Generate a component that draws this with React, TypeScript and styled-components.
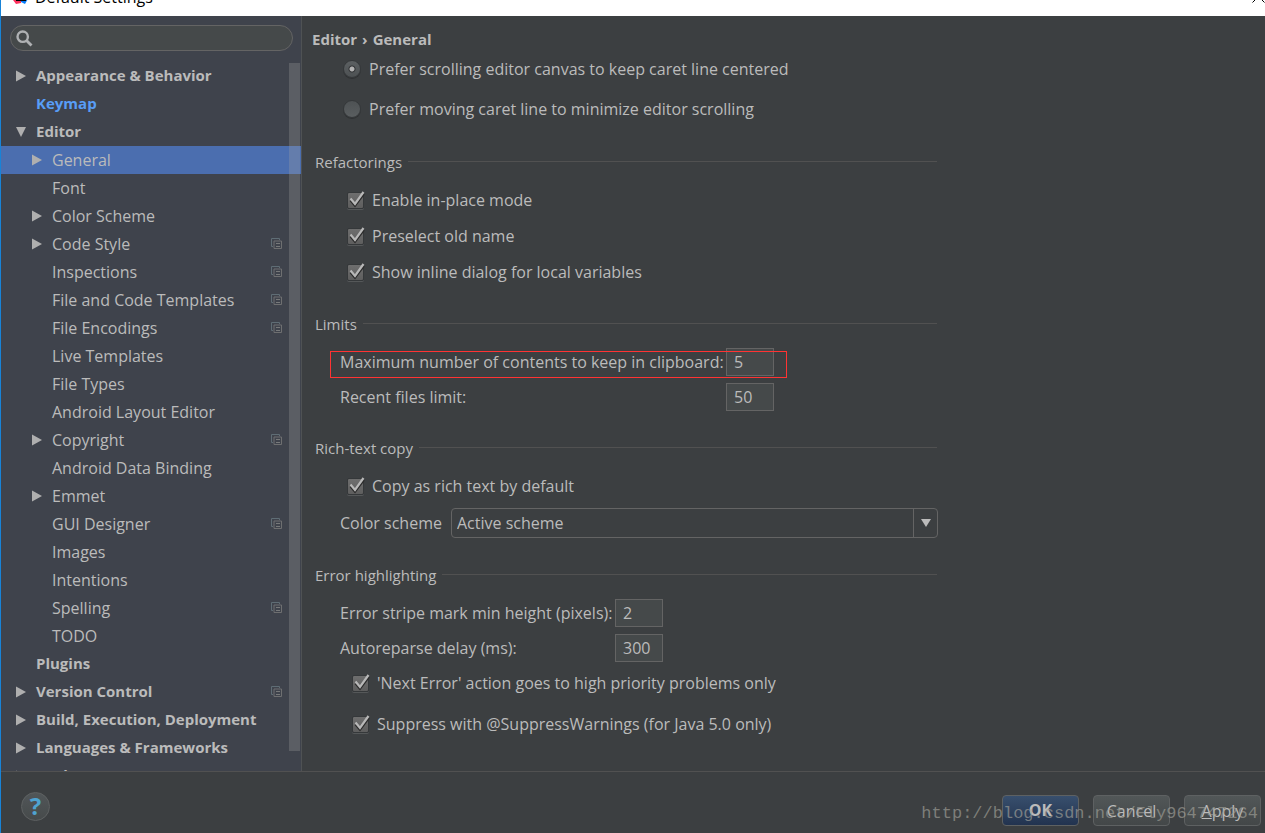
import React, { useState } from "react";
import styled, { createGlobalStyle, css } from "styled-components";

const GlobalStyle = createGlobalStyle`
  *, *::before, *::after { box-sizing: border-box; }
  body {
    margin: 0;
    background: #3c3f41;
    color: #bbbbbb;
    font: 16px/20px "Open Sans", "Noto Sans", sans-serif;
  }
  button, input, select { font: inherit; color: inherit; }
`;

const Window = styled.div`
  position: relative;
  display: flex;
  flex-direction: column;
  height: 100vh;
  overflow: hidden;
  border-left: 1px solid #1883d7;
`;

const TitleBar = styled.header`
  display: flex;
  flex: none;
  align-items: flex-end;
  gap: 6px;
  height: 16px;
  padding: 0 0 12px 12px;
  overflow: hidden;
  background: #ffffff;
  color: #000000;
`;

const TitleText = styled.span`
  flex: 1;
  line-height: 14px;
`;

const CloseButton = styled.button`
  display: flex;
  align-items: flex-end;
  padding: 0;
  border: 0;
  background: none;
  color: #000000;
`;

const Body = styled.div`
  display: flex;
  flex: 1;
  min-height: 0;
`;

const Sidebar = styled.aside`
  display: flex;
  flex: none;
  flex-direction: column;
  width: 301px;
  padding-top: 9px;
  border-right: 1px solid #4f5254;
  background: #3f434c;
`;

const SearchBox = styled.label`
  display: flex;
  flex: none;
  align-items: center;
  height: 26px;
  margin: 0 8px 11px 9px;
  padding-left: 5px;
  border: 1px solid #646464;
  border-radius: 13px;
  background: #45494a;
`;

const SearchInput = styled.input`
  flex: 1;
  min-width: 0;
  padding: 0 8px;
  border: 0;
  outline: 0;
  background: none;
`;

const TreeArea = styled.nav`
  position: relative;
  flex: 1;
  min-height: 0;
  overflow: hidden;
`;

const ScrollThumb = styled.div`
  position: absolute;
  top: 1px;
  right: 1px;
  bottom: 20px;
  width: 11px;
  background: rgba(166, 166, 166, 0.28);
`;

const RowLabel = styled.span`
  flex: 1;
`;

const TreeRow = styled.a<{ $level: number; $bold?: boolean; $active?: boolean; $accent?: boolean }>`
  display: flex;
  align-items: center;
  height: 28px;
  padding: 0 18px 0 ${(p) => (p.$level ? 31 : 15)}px;
  color: ${(p) => (p.$accent ? "#589df6" : "inherit")};
  text-decoration: none;
  white-space: nowrap;
  ${(p) =>
    p.$bold &&
    css`
      font-size: 15px;
      font-weight: 700;

      ${RowLabel} { padding-bottom: 2px; }
    `}
  ${(p) => p.$active && css`background: #4b6eaf;`}
`;

const ArrowSlot = styled.span`
  display: flex;
  flex: none;
  width: 20px;
`;

const Content = styled.main`
  flex: 1;
  min-width: 0;
  padding: 13px 20px 0 10px;
  overflow: hidden;
`;

const Breadcrumb = styled.h1`
  display: flex;
  gap: 5px;
  margin: 0;
  font-size: 15px;
  line-height: 20px;
`;

const Form = styled.form`
  max-width: 626px;
  padding-left: 3px;
`;

const Group = styled.fieldset<{ $gap: number }>`
  min-width: 0;
  margin: ${(p) => p.$gap}px 0 0;
  padding: 0;
  border: 0;
`;

const GroupTitle = styled.div`
  display: flex;
  align-items: center;
  gap: 6px;
  font-size: 15px;

  &::after {
    flex: 1;
    height: 1px;
    margin: 0 1px 2px 0;
    background: #515151;
    content: "";
  }
`;

const Stack = styled.div<{ $top?: number; $indent: number; $gap?: number }>`
  display: flex;
  flex-direction: column;
  gap: ${(p) => p.$gap ?? 0}px;
  padding: ${(p) => p.$top ?? 0}px 0 0 ${(p) => p.$indent}px;
`;

const OptionLabel = styled.label<{ $height: number }>`
  display: flex;
  align-items: center;
  gap: 7px;
  height: ${(p) => p.$height}px;
`;

const RadioLabel = styled(OptionLabel)`
  gap: 8px;
`;

const Radio = styled.input`
  width: 18px;
  height: 18px;
  margin: 0;
  border: 1px solid #35383a;
  border-radius: 50%;
  appearance: none;
  background: linear-gradient(#4e5254, #5a5e60);
  box-shadow: 0 1px 0 #2f3133;

  &:checked {
    background:
      radial-gradient(circle, #b4b4b4 0 2px, #2f3133 3px, transparent 4px),
      linear-gradient(#5c6062, #4d5153);
  }
`;

const CheckWrap = styled.span`
  position: relative;
  display: flex;
  width: 18px;
  height: 18px;
`;

const CheckInput = styled.input`
  width: 17px;
  height: 17px;
  margin: 1px 0 0;
  border: 1px solid #35383a;
  border-radius: 2px;
  appearance: none;
  background: linear-gradient(#6e6e6e, #5e5e5e);
  box-shadow: 0 1px 0 #555859;

  & + svg { visibility: hidden; }
  &:checked + svg { visibility: visible; }
`;

const CheckMark = styled.svg`
  position: absolute;
  top: 0;
  left: 0;
  pointer-events: none;
`;

const FieldRow = styled.div<{ $labelWidth: number }>`
  position: relative;
  display: grid;
  grid-template-columns: ${(p) => p.$labelWidth}px 48px;
  align-items: center;
  white-space: nowrap;
`;

const NumberBox = styled.input`
  width: 48px;
  height: 28px;
  padding: 0 7px;
  border: 1px solid #646464;
  outline: 0;
  background: #45494a;
`;

const Marker = styled.div`
  position: absolute;
  top: 3px;
  left: -10px;
  width: 457px;
  height: 27px;
  border: 1px solid #ff3333;
  pointer-events: none;
`;

const ComboRow = styled.div`
  display: grid;
  grid-template-columns: 111px 1fr;
  align-items: center;
  margin-top: 4px;
`;

const ComboBox = styled.div`
  position: relative;
  display: flex;
`;

const Combo = styled.select`
  flex: 1;
  height: 30px;
  padding: 0 30px 0 5px;
  border: 1px solid #646464;
  border-radius: 4px;
  outline: 0;
  appearance: none;
  background: #3c3f41;
`;

const ComboArrow = styled.span`
  position: absolute;
  top: 1px;
  right: 1px;
  bottom: 1px;
  display: flex;
  align-items: center;
  justify-content: center;
  width: 24px;
  border-left: 1px solid #646464;
  pointer-events: none;
`;

const Footer = styled.footer`
  display: flex;
  flex: none;
  align-items: flex-start;
  height: 62px;
  padding: 0 4px 0 20px;
  border-top: 1px solid #515151;
`;

const HelpButton = styled.button`
  display: flex;
  align-items: center;
  justify-content: center;
  width: 29px;
  height: 29px;
  margin: 20px auto 0 0;
  padding: 0 0 2px;
  border: 1px solid #5e6162;
  border-radius: 50%;
  background: linear-gradient(#515658, #464a4b);
  color: #4fa3d1;
  font-size: 24px;
  font-weight: 700;
`;

const ButtonBar = styled.div`
  display: flex;
  gap: 14px;
  padding-top: 23px;
`;

const PushButton = styled.button<{ $primary?: boolean }>`
  width: 77px;
  height: 31px;
  padding: 0;
  border: 1px solid #5e6162;
  border-radius: 4px;
  background: linear-gradient(#525758, #434748);
  ${(p) =>
    p.$primary &&
    css`
      padding-bottom: 2px;
      background: linear-gradient(#384f6d, #22334f);
      font-weight: 700;
    `}
`;

const Watermark = styled.div`
  position: absolute;
  right: 7px;
  bottom: 9px;
  color: rgba(160, 160, 152, 0.66);
  font: 17px/20px "Liberation Mono", monospace;
  pointer-events: none;
`;

const TriangleRight = () => (
  <svg width="10" height="12" viewBox="0 0 10 12" fill="#afafaf" aria-hidden="true">
    <path d="M0 0.5 10 6 0 11.5z" />
  </svg>
);

const TriangleDown = () => (
  <svg width="10" height="10" viewBox="0 0 10 10" fill="#afafaf" aria-hidden="true">
    <path d="M0 0H10L5 10z" />
  </svg>
);

const ComboTriangle = () => (
  <svg width="10" height="8" viewBox="0 0 10 8" fill="#bbbbbb" aria-hidden="true">
    <path d="M0 0H10L5 8z" />
  </svg>
);

const CopyIcon = () => (
  <svg width="12" height="12" viewBox="0 0 12 12" fill="none" aria-hidden="true">
    <path d="M8.5 2V0.5H0.5V8.5H2" stroke="#5f6d75" />
    <path d="M3 3H10.5V10.5H3z" stroke="#6e6f70" />
    <path d="M5 5.5H9M5 8.5H9" stroke="#77797a" />
  </svg>
);

const SearchIcon = () => (
  <svg width="17" height="17" viewBox="0 0 17 17" fill="none" stroke="#afb1b3" aria-hidden="true">
    <circle cx="6.7" cy="6.7" r="5.2" strokeWidth="2.4" />
    <path d="M10.5 10.5 15.5 15.5" strokeWidth="2.8" />
  </svg>
);

const AppLogo = () => (
  <svg width="16" height="16" viewBox="0 0 16 16" aria-hidden="true">
    <path d="M1 2H8V15L3 16 0 12z" fill="#fe315d" />
    <path d="M8 2H15L16 9 12 16 8 14z" fill="#087cfa" />
    <path d="M3 3H13V13H3z" fill="#000000" />
  </svg>
);

type Item = {
  label: string;
  level?: number;
  arrow?: "right" | "down";
  copy?: boolean;
  active?: boolean;
  accent?: boolean;
};

const items: Item[] = [
  { label: "Appearance & Behavior", arrow: "right" },
  { label: "Keymap", accent: true },
  { label: "Editor", arrow: "down" },
  { label: "General", level: 1, arrow: "right", active: true },
  { label: "Font", level: 1 },
  { label: "Color Scheme", level: 1, arrow: "right" },
  { label: "Code Style", level: 1, arrow: "right", copy: true },
  { label: "Inspections", level: 1, copy: true },
  { label: "File and Code Templates", level: 1, copy: true },
  { label: "File Encodings", level: 1, copy: true },
  { label: "Live Templates", level: 1 },
  { label: "File Types", level: 1 },
  { label: "Android Layout Editor", level: 1 },
  { label: "Copyright", level: 1, arrow: "right", copy: true },
  { label: "Android Data Binding", level: 1 },
  { label: "Emmet", level: 1, arrow: "right" },
  { label: "GUI Designer", level: 1, copy: true },
  { label: "Images", level: 1 },
  { label: "Intentions", level: 1 },
  { label: "Spelling", level: 1, copy: true },
  { label: "TODO", level: 1 },
  { label: "Plugins" },
  { label: "Version Control", arrow: "right", copy: true },
  { label: "Build, Execution, Deployment", arrow: "right" },
  { label: "Languages & Frameworks", arrow: "right" },
  { label: "Tools", arrow: "right" },
];

function CheckOption({ label, height = 36 }: { label: string; height?: number }) {
  return (
    <OptionLabel $height={height}>
      <CheckWrap>
        <CheckInput type="checkbox" defaultChecked />
        <CheckMark width="18" height="18" viewBox="0 0 18 18" fill="none">
          <path d="M3.5 9.5 8 15 17 3" stroke="#2b2b2b" strokeWidth="2" />
          <path d="M3.5 7.5 8 13 16.5 1" stroke="#b8b8b8" strokeWidth="2.2" />
        </CheckMark>
      </CheckWrap>
      <span>{label}</span>
    </OptionLabel>
  );
}

function NumberField(props: {
  id: string;
  label: string;
  value: string;
  labelWidth: number;
  marked?: boolean;
}) {
  return (
    <FieldRow $labelWidth={props.labelWidth}>
      <label htmlFor={props.id}>{props.label}</label>
      <NumberBox id={props.id} defaultValue={props.value} />
      {props.marked && <Marker />}
    </FieldRow>
  );
}

export default function App() {
  const [scrolling, setScrolling] = useState("canvas");

  return (
    <Window>
      <GlobalStyle />
      <TitleBar>
        <AppLogo />
        <TitleText>Default Settings</TitleText>
        <CloseButton aria-label="Close">
          <svg width="13" height="14" viewBox="0 0 13 14" stroke="#000000" fill="none">
            <path d="M0.5 0.5 12.5 12.5M12.5 0.5 0.5 12.5" />
          </svg>
        </CloseButton>
      </TitleBar>

      <Body>
        <Sidebar>
          <SearchBox>
            <SearchIcon />
            <SearchInput type="text" aria-label="Search settings" />
          </SearchBox>
          <TreeArea>
            {items.map((item) => (
              <TreeRow
                key={item.label}
                href="#"
                $level={item.level ?? 0}
                $bold={!item.level}
                $active={item.active}
                $accent={item.accent}
              >
                <ArrowSlot>
                  {item.arrow === "right" && <TriangleRight />}
                  {item.arrow === "down" && <TriangleDown />}
                </ArrowSlot>
                <RowLabel>{item.label}</RowLabel>
                {item.copy && <CopyIcon />}
              </TreeRow>
            ))}
            <ScrollThumb />
          </TreeArea>
        </Sidebar>

        <Content>
          <Breadcrumb>
            <span>Editor</span>
            <span>›</span>
            <span>General</span>
          </Breadcrumb>
          <Form>
            <Stack $indent={28}>
              <RadioLabel $height={40}>
                <Radio
                  type="radio"
                  name="scrolling"
                  checked={scrolling === "canvas"}
                  onChange={() => setScrolling("canvas")}
                />
                <span>Prefer scrolling editor canvas to keep caret line centered</span>
              </RadioLabel>
              <RadioLabel $height={40}>
                <Radio
                  type="radio"
                  name="scrolling"
                  checked={scrolling === "caret"}
                  onChange={() => setScrolling("caret")}
                />
                <span>Prefer moving caret line to minimize editor scrolling</span>
              </RadioLabel>
            </Stack>

            <Group $gap={23} aria-label="Refactorings">
              <GroupTitle>Refactorings</GroupTitle>
              <Stack $top={10} $indent={32}>
                <CheckOption label="Enable in-place mode" />
                <CheckOption label="Preselect old name" />
                <CheckOption label="Show inline dialog for local variables" />
              </Stack>
            </Group>

            <Group $gap={24} aria-label="Limits">
              <GroupTitle>Limits</GroupTitle>
              <Stack $top={14} $indent={25} $gap={7}>
                <NumberField
                  id="clipboard"
                  label="Maximum number of contents to keep in clipboard:"
                  value="5"
                  labelWidth={386}
                  marked
                />
                <NumberField id="recent" label="Recent files limit:" value="50" labelWidth={386} />
              </Stack>
            </Group>

            <Group $gap={27} aria-label="Rich-text copy">
              <GroupTitle>Rich-text copy</GroupTitle>
              <Stack $top={10} $indent={32}>
                <CheckOption label="Copy as rich text by default" />
              </Stack>
              <Stack $indent={25}>
                <ComboRow>
                  <label htmlFor="scheme">Color scheme</label>
                  <ComboBox>
                    <Combo id="scheme" defaultValue="active">
                      <option value="active">Active scheme</option>
                    </Combo>
                    <ComboArrow>
                      <ComboTriangle />
                    </ComboArrow>
                  </ComboBox>
                </ComboRow>
              </Stack>
            </Group>

            <Group $gap={27} aria-label="Error highlighting">
              <GroupTitle>Error highlighting</GroupTitle>
              <Stack $top={14} $indent={25} $gap={7}>
                <NumberField
                  id="stripe"
                  label="Error stripe mark min height (pixels):"
                  value="2"
                  labelWidth={275}
                />
                <NumberField id="reparse" label="Autoreparse delay (ms):" value="300" labelWidth={275} />
              </Stack>
              <Stack $indent={37}>
                <CheckOption height={41} label="'Next Error' action goes to high priority problems only" />
                <CheckOption height={41} label="Suppress with @SuppressWarnings (for Java 5.0 only)" />
              </Stack>
            </Group>
          </Form>
        </Content>
      </Body>

      <Footer>
        <HelpButton aria-label="Help">?</HelpButton>
        <ButtonBar>
          <PushButton $primary>OK</PushButton>
          <PushButton>Cancel</PushButton>
          <PushButton>
            <u>A</u>pply
          </PushButton>
        </ButtonBar>
      </Footer>
      <Watermark>http://blog.csdn.net/Fly964747264</Watermark>
    </Window>
  );
}
